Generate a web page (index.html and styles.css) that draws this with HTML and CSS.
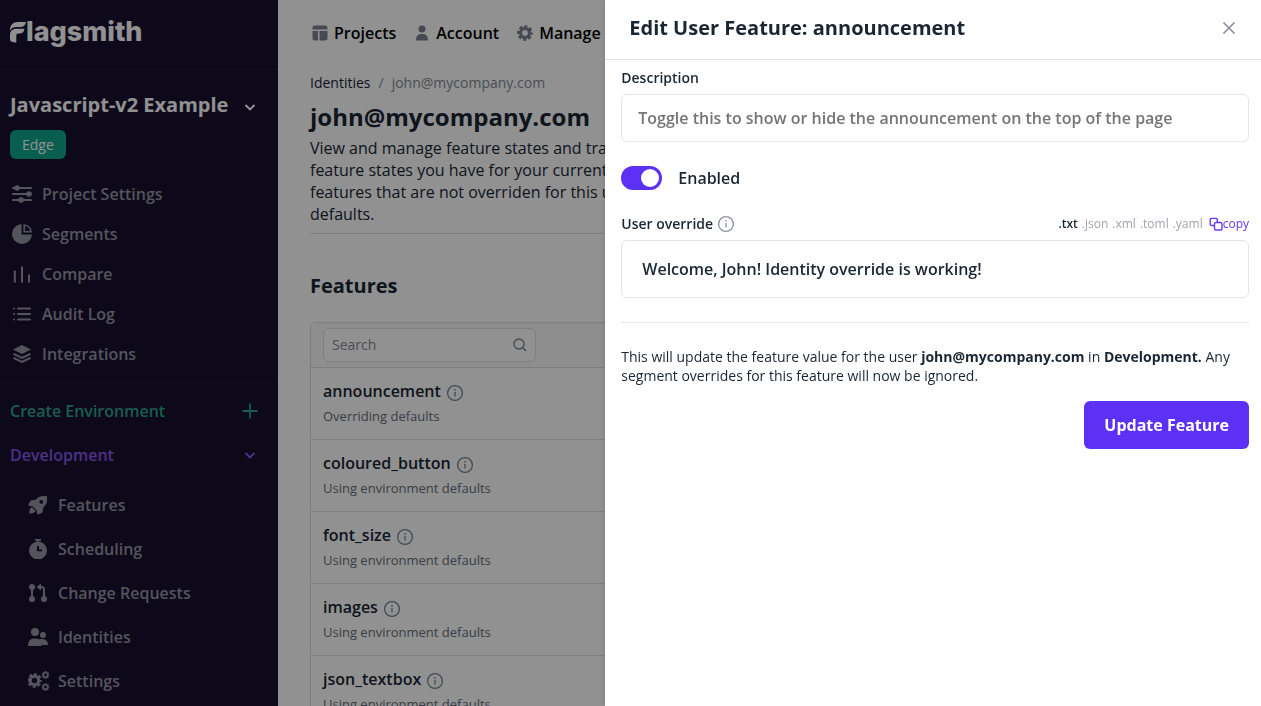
FILE: index.html
```html
<!DOCTYPE html>
<html lang="en">
<head>
<meta charset="utf-8">
<meta name="viewport" content="width=device-width, initial-scale=1">
<title>Flagsmith</title>
<link rel="stylesheet" href="styles.css">
</head>
<body>
<svg class="defs" aria-hidden="true">
  <symbol id="i-info" viewBox="0 0 18 18"><circle cx="9" cy="9" r="7.4" fill="none" stroke="currentColor" stroke-width="1.3"/><path d="M9 8v4.6" stroke="currentColor" stroke-width="1.3"/><circle cx="9" cy="5.8" r=".9" fill="currentColor"/></symbol>
  <symbol id="i-down" viewBox="0 0 14 14"><path d="M2.5 5 7 9.4 11.500 5" fill="none" stroke="currentColor" stroke-width="2"/></symbol>
  <symbol id="i-gear" viewBox="0 0 20 20"><circle cx="10" cy="10" r="5.600" fill="none" stroke="currentColor" stroke-width="4"/><circle cx="10" cy="10" r="8" fill="none" stroke="currentColor" stroke-width="3.600" stroke-dasharray="3.900 2.383" stroke-dashoffset="1.950"/></symbol>
</svg>
<div class="app">
  <aside class="sidebar">
    <a class="brand" href="#" aria-label="Flagsmith">
      <svg class="mark" width="16" height="22" viewBox="0 0 16 22" aria-hidden="true"><path d="M0 9.500C0 4 3 1 8 1H16C15.500 4.500 13.500 6 10 6H6.500C3.500 6 1.500 7 0 9.500z"/><path d="M0 18.500V14C0 10 2.500 7.800 6.500 7.800H14.500C14 11 12.500 12.600 9.500 12.600H8.500C7 12.600 6.300 13.300 6.300 14.800V21.500C2.500 21.500 0 20.500 0 18.500z"/></svg><span>lagsmith</span>
    </a>
    <div class="project">
      <button class="project-name" type="button">Javascript-v2 Example <svg width="14" height="14"><use href="#i-down"/></svg></button>
      <span class="badge">Edge</span>
      <nav class="nav" aria-label="Project">
        <a href="#"><svg width="20" height="20" viewBox="0 0 20 20"><path d="M1 4h18M1 10h18M1 16h18" stroke="currentColor" stroke-width="2" stroke-linecap="round"/><circle cx="5" cy="4" r="2.800"/><circle cx="17" cy="10" r="2.800"/><circle cx="9" cy="16" r="2.800"/></svg>Project Settings</a>
        <a href="#"><svg width="20" height="20" viewBox="0 0 20 20"><path d="M9.500 0A10 10 0 1 0 20 10.500H9.500z"/><path d="M12.200 1v6.800H19A7.500 7.500 0 0 0 12.200 1z" fill="none" stroke="currentColor" stroke-width="1.600"/></svg>Segments</a>
        <a href="#"><svg width="20" height="20" viewBox="0 0 20 20"><path d="M2.800 6.500v12M10 2.500v16M17 10.500v8" stroke="currentColor" stroke-width="2"/></svg>Compare</a>
        <a href="#"><svg width="20" height="20" viewBox="0 0 20 20"><path d="M6 4.500h12M6 10h12M6 15.500h12" stroke="currentColor" stroke-width="2" stroke-linecap="round"/><path d="M1 4.500h2M1 10h2M1 15.500h2" stroke="currentColor" stroke-width="1.500"/></svg>Audit Log</a>
        <a href="#"><svg width="20" height="20" viewBox="0 0 20 20"><path d="M10 1l9 4.500-9 4.500-9-4.500z"/><path d="M1.500 9.800 10 14l8.500-4.200M1.500 13.800 10 18l8.500-4.200" fill="none" stroke="currentColor" stroke-width="2"/></svg>Integrations</a>
      </nav>
    </div>
    <div class="environments">
      <a class="env env-new" href="#">Create Environment <svg width="16" height="16" viewBox="0 0 16 16"><path d="M8 .5v15M.5 8h15" stroke="currentColor" stroke-width="1.800"/></svg></a>
      <button class="env env-current" type="button">Development <svg width="14" height="14"><use href="#i-down"/></svg></button>
      <nav class="nav nav-env" aria-label="Environment">
        <a href="#"><svg width="20" height="20" viewBox="0 0 20 20"><path fill-rule="evenodd" d="M18.800 1.200C13 .2 9.800 2 7.700 4.700L3.500 5.200Q2.500 5.500 2 6.500L.5 9.800Q.5 11 1.800 11L4.500 11.200 8.800 15.500 9 18.200Q9.200 19.500 10.300 19.500L13.500 18Q14.500 17.500 14.800 16.500L15.300 12.300C18 10.200 19.800 7 18.800 1.200zM13.300 5a1.900 1.900 0 1 1 0 3.800a1.900 1.900 0 0 1 0-3.800z"/><path d="M3.700 12C1.800 13.300 1.300 16 1.300 18.700 4 18.700 6.700 18 7.800 16z"/></svg>Features</a>
        <a href="#"><svg width="20" height="20" viewBox="0 0 20 20"><path d="M7 0h6v1.800H11V4H9V1.800H7z"/><path fill-rule="evenodd" d="M10 2.500a9 9 0 1 1 0 18a9 9 0 0 1 0-18zM9 7v5.300h5v-1.900h-3V7z"/></svg>Scheduling</a>
        <a href="#"><svg width="20" height="20" viewBox="0 0 20 20"><circle cx="4" cy="4" r="3"/><circle cx="4" cy="16" r="3"/><circle cx="16" cy="16" r="3"/><path d="M4 4v12M16 16V6.500Q16 4 13.500 4H11" fill="none" stroke="currentColor" stroke-width="2"/><path d="M13 .5v7L8.500 4z"/></svg>Change Requests</a>
        <a href="#"><svg width="20" height="20" viewBox="0 0 20 20"><circle cx="7" cy="5" r="4"/><circle cx="15" cy="8" r="3"/><path d="M0 19C0 14 2 11.500 7 11.500c3.500 0 5.500 1 6.500 3V19z"/><path d="M11.500 12.300c4-.7 8.500.5 8.500 5.700h-6z"/></svg>Identities</a>
        <a href="#"><svg width="22" height="20" viewBox="0 0 22 20"><use href="#i-gear" x="-1" y="2" width="15" height="15"/><use href="#i-gear" x="13.500" y="0" width="8" height="8"/><use href="#i-gear" x="13.500" y="12" width="8" height="8"/></svg>Settings</a>
      </nav>
    </div>
  </aside>

  <main class="main">
    <nav class="topnav" aria-label="Main">
      <a href="#"><svg width="20" height="20" viewBox="0 0 20 20"><path d="M2.500 6.500V5a2.500 2.500 0 0 1 2.500-2.500h10A2.500 2.500 0 0 1 17.500 5v1.500zM2.500 8h5.500v9.500H5A2.500 2.500 0 0 1 2.500 15zM9.500 8h8v7a2.500 2.500 0 0 1-2.500 2.500H9.500z"/></svg>Projects</a>
      <a href="#"><svg width="20" height="20" viewBox="0 0 20 20"><circle cx="10" cy="6" r="3.500"/><path d="M4 17.500C4 12.500 6 11 10 11s6 1.500 6 6.500z"/></svg>Account</a>
      <a href="#"><svg width="20" height="20"><use href="#i-gear" x="2" y="2" width="16" height="16"/></svg>Manage</a>
    </nav>
    <nav class="crumbs" aria-label="Breadcrumb"><a href="#">Identities</a><span>/</span><span>john@mycompany.com</span></nav>
    <h1>john@mycompany.com</h1>
    <p class="intro">View and manage feature states and traits for this user. This will override any feature states you have for your current environment for this user only. Any features that are not overriden for this user will fallback to your environment defaults.</p>
    <h2>Features</h2>
    <section class="panel" aria-label="Features">
      <div class="panel-head">
        <label class="search"><input type="search" placeholder="Search" aria-label="Search"><svg width="14" height="14" viewBox="0 0 14 14"><circle cx="6" cy="6" r="5" fill="none" stroke="currentColor" stroke-width="1.300"/><path d="M9.800 9.800 13 13" stroke="currentColor" stroke-width="1.300"/></svg></label>
      </div>
      <ul class="features">
        <li><h3>announcement <svg width="18" height="18"><use href="#i-info"/></svg></h3><p>Overriding defaults</p></li>
        <li><h3>coloured_button <svg width="18" height="18"><use href="#i-info"/></svg></h3><p>Using environment defaults</p></li>
        <li><h3>font_size <svg width="18" height="18"><use href="#i-info"/></svg></h3><p>Using environment defaults</p></li>
        <li><h3>images <svg width="18" height="18"><use href="#i-info"/></svg></h3><p>Using environment defaults</p></li>
        <li><h3>json_textbox <svg width="18" height="18"><use href="#i-info"/></svg></h3><p>Using environment defaults</p></li>
      </ul>
    </section>
  </main>
</div>

<div class="backdrop"></div>
<div class="drawer" role="dialog" aria-modal="true" aria-labelledby="drawer-title">
  <header class="drawer-head">
    <h2 id="drawer-title">Edit User Feature: announcement</h2>
    <button class="close" type="button" aria-label="Close"><svg width="14" height="14" viewBox="0 0 14 14"><path d="M1.500 1.500l11 11M12.500 1.500l-11 11" stroke="currentColor" stroke-width="1.700"/></svg></button>
  </header>
  <form class="drawer-body">
    <label class="label" for="description">Description</label>
    <input class="field" id="description" type="text" placeholder="Toggle this to show or hide the announcement on the top of the page">
    <label class="toggle"><input type="checkbox" role="switch" checked>Enabled</label>
    <div class="value-head">
      <label class="label" for="override">User override <svg width="18" height="18"><use href="#i-info"/></svg></label>
      <div class="formats">
        <button class="active" type="button">.txt</button>
        <button type="button">.json</button>
        <button type="button">.xml</button>
        <button type="button">.toml</button>
        <button type="button">.yaml</button>
        <button class="copy" type="button"><svg width="14" height="14" viewBox="0 0 14 14"><path d="M5 8.500H2.500a1.300 1.300 0 0 1-1.300-1.300v-4.500a1.300 1.300 0 0 1 1.300-1.300h4.500a1.300 1.300 0 0 1 1.300 1.300V5" fill="none" stroke="currentColor" stroke-width="1.400"/><rect x="5.500" y="5.500" width="7.500" height="7.500" rx="1.500" fill="none" stroke="currentColor" stroke-width="1.400"/></svg>copy</button>
      </div>
    </div>
    <input class="field value" id="override" type="text" value="Welcome, John! Identity override is working!">
    <hr>
    <p class="note">This will update the feature value for the user <strong>john@mycompany.com</strong> in <strong>Development.</strong> Any segment overrides for this feature will now be ignored.</p>
    <button class="primary" type="button">Update Feature</button>
  </form>
</div>
</body>
</html>
```

FILE: styles.css
```css
* { box-sizing: border-box; }
body {
  margin: 0;
  height: 100vh;
  overflow: hidden;
  font: 16px/22px "Open Sans", "Noto Sans", sans-serif;
  color: #1a2634;
  background: #fff;
}
h1, h2, h3, p, ul { margin: 0; padding: 0; }
ul { list-style: none; }
a { color: inherit; text-decoration: none; }
button { font: inherit; color: inherit; background: none; border: 0; padding: 0; }
svg { flex: none; fill: currentColor; }
.defs { position: absolute; width: 0; height: 0; }

.app { display: flex; height: 100vh; overflow: hidden; }

/* Sidebar */
.sidebar { flex: none; width: 278px; background: #190f30; color: #fff; }
.brand {
  display: flex;
  align-items: center;
  height: 70px;
  padding: 0 10px 5px;
  border-bottom: 1px solid #231b3e;
  font: 800 27px/32px Inter, sans-serif;
}
.project { padding: 21px 0 8px; border-bottom: 1px solid #231b3e; }
.project-name, .env {
  display: flex;
  align-items: center;
  justify-content: space-between;
  width: 100%;
  padding: 0 21px 0 10px;
}
.project-name { font-size: 20px; line-height: 28px; font-weight: 700; }
.project-name svg { margin-top: 4px; }
.badge {
  display: inline-block;
  margin: 11px 10px 15px;
  padding: 0 12px;
  border-radius: 6px;
  background: #10a88c;
  font-size: 14px;
  line-height: 29px;
  font-weight: 500;
  vertical-align: top;
}
.nav a {
  display: flex;
  align-items: center;
  gap: 10px;
  height: 40px;
  padding-left: 12px;
  color: #9496a2;
  font-weight: 600;
}
.environments { padding-top: 6px; }
.env { height: 44px; font-weight: 600; }
.env-new { color: #2ba48b; padding-right: 20px; }
.env-current { color: #8559e8; }
.nav-env { padding-top: 6px; }
.nav-env a { height: 44px; padding-left: 28px; }
.nav-env a:last-child { gap: 8px; }

/* Page */
.main { flex: 1; min-width: 0; padding: 22px 32px 0; }
.topnav { display: flex; gap: 16px; color: #000; font-weight: 600; }
.topnav a { display: flex; align-items: center; gap: 4px; }
.topnav svg { color: #7c8190; }
.crumbs { display: flex; gap: 8px; margin-top: 28px; font-size: 14px; color: #838992; }
.crumbs a { color: #1a2634; }
h1 { margin-top: 7px; font-size: 24px; line-height: 32px; }
.intro { max-width: 620px; margin-top: 4px; }
h2 { font-size: 20px; line-height: 28px; }
.main h2 { margin-top: 8px; padding-top: 38px; border-top: 1px solid #dcdde0; }
.panel {
  margin-top: 22px;
  border: 1px solid #dcdde0;
  border-radius: 6px 6px 0 0;
  overflow: hidden;
}
.panel-head { padding: 5px 12px; background: #fafafb; }
.search {
  display: flex;
  align-items: center;
  width: 213px;
  height: 34px;
  padding: 0 8px;
  border: 1px solid #dcdde0;
  border-radius: 6px;
  background: #fff;
  color: #7c8190;
}
.search input {
  flex: 1;
  min-width: 0;
  padding: 0;
  border: 0;
  outline: 0;
  background: none;
  font: inherit;
  font-size: 14px;
}
.search input::placeholder { color: #838992; opacity: 1; }
.features li { height: 72px; padding: 12px; border-top: 1px solid #dcdde0; }
.features h3 { display: flex; align-items: center; gap: 5px; font-size: 16px; line-height: 22px; font-weight: 600; }
.features svg { margin-top: 3px; color: #7c8190; }
.features p { margin-top: 4px; font-size: 13px; line-height: 20px; color: #656d7b; }

/* Drawer */
.backdrop { position: fixed; inset: 0; background: rgba(0, 0, 0, .43); }
.drawer {
  position: fixed;
  inset: 0 0 0 auto;
  width: 52vw;
  background: #fff;
  box-shadow: 0 0 6px rgba(0, 0, 0, .15);
}
.drawer-head {
  display: flex;
  align-items: center;
  justify-content: space-between;
  height: 60px;
  padding: 0 23px 4px 24px;
  border-bottom: 1px solid #e3e4e7;
}
.close { display: flex; padding: 2px; color: #8c919c; }
.drawer-body { display: flex; flex-direction: column; padding: 8px 12px 16px 16px; }
.label { display: flex; align-items: center; gap: 4px; font-size: 14px; line-height: 20px; font-weight: 600; }
.label svg { color: #8c919c; }
.field {
  width: 100%;
  height: 48px;
  margin-top: 6px;
  padding: 0 16px;
  border: 1px solid #e3e4e7;
  border-radius: 6px;
  background: #fff;
  color: #1a2634;
  font: inherit;
  font-weight: 600;
}
.field::placeholder { color: #757575; opacity: 1; }
.value { height: 58px; padding: 0 20px; }
.toggle { display: flex; align-items: center; gap: 16px; height: 24px; margin-top: 24px; font-weight: 600; }
.toggle input {
  appearance: none;
  display: flex;
  justify-content: flex-end;
  width: 41px;
  height: 24px;
  margin: 0;
  padding: 3px;
  border-radius: 12px;
  background: #5d31f5;
}
.toggle input::before { content: ""; width: 18px; height: 18px; border-radius: 50%; background: #fff; }
.value-head { display: flex; align-items: center; justify-content: space-between; margin-top: 24px; }
.formats { display: flex; align-items: center; gap: 4px; font-size: 12px; line-height: 20px; color: #9da4ae; }
.formats .active { color: #1a2634; font-weight: 600; }
.copy { display: flex; align-items: center; margin-left: 2px; color: #6837fc; }
hr { width: 100%; height: 1px; margin: 24px 0; border: 0; background: #e3e4e7; }
.note { font-size: 14px; line-height: 19px; }
.primary {
  align-self: flex-end;
  height: 48px;
  margin-top: 16px;
  padding: 0 20px;
  border-radius: 6px;
  background: #5d31f5;
  color: #fff;
  font-weight: 700;
}
```
